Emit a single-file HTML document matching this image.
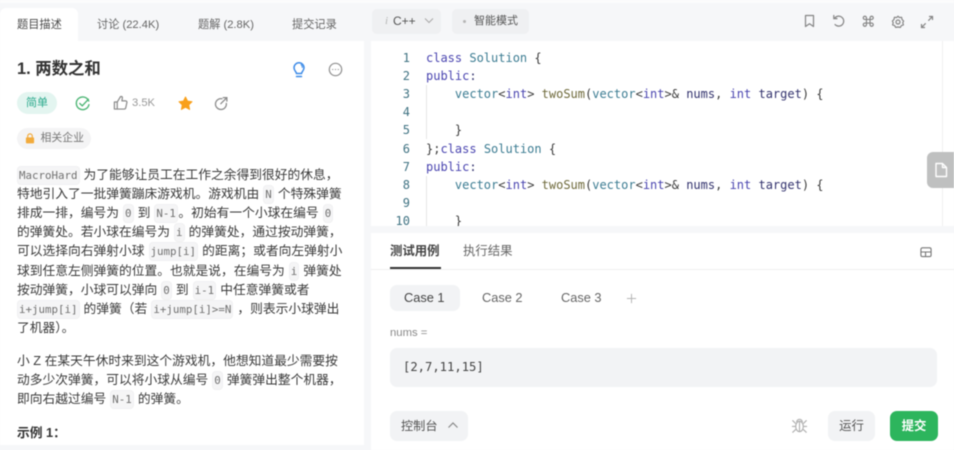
<!DOCTYPE html>
<html lang="zh"><head><meta charset="utf-8"><style>
*{box-sizing:border-box;margin:0;padding:0}
html,body{width:954px;height:450px;overflow:hidden;background:#f6f7f9}
#r{position:absolute;left:0;top:0;width:954px;height:450px;overflow:hidden;background:#f6f7f9;font-family:"Liberation Sans","Noto Sans CJK SC",sans-serif;color:#3c3c3c;filter:blur(.45px)}
.a{position:absolute;white-space:nowrap}
.l{position:absolute;left:17px;white-space:nowrap;font-size:12.75px;line-height:19px;height:19px;color:#3a3a3a}
code{font-family:"DejaVu Sans Mono","Liberation Mono",monospace;font-size:10.8px;color:#707070;background:#f5f5f6;border-radius:4px;padding:2px 1px;margin:0 .5px;border:1px solid #f1f1f2}
.c{position:absolute;left:426px;white-space:pre;font-family:"DejaVu Sans Mono","Liberation Mono",monospace;font-size:12px;line-height:18px;color:#3a3a3a}
.n{position:absolute;width:39px;left:371px;text-align:right;font-family:"DejaVu Sans Mono","Liberation Mono",monospace;font-size:12px;line-height:18px;color:#3f7282}
.k{color:#4a45b0}.t{color:#3c7c92}.f{color:#6f6a3c}.v{color:#33336e}
svg{position:absolute;fill:none}
.tb{position:absolute;top:17px;white-space:nowrap;font-size:11.2px;line-height:16px;color:#666}
</style></head><body><div id="r">
<!-- panels -->
<div class="a" style="left:0;top:0;width:954px;height:3px;background:#fcfcfc"></div>
<div class="a" style="left:0;top:41px;width:364px;height:404px;background:#fff"></div>
<div class="a" style="left:0;top:8px;width:78px;height:34px;background:#fff;border-radius:6px 6px 0 0"></div>
<div class="a" style="left:371px;top:41px;width:583px;height:185px;background:#fff"></div>
<div class="a" style="left:371px;top:233px;width:583px;height:217px;background:#fff"></div>
<div class="a" style="left:942px;top:41px;width:1px;height:185px;background:#f0f0f0"></div>
<!-- left tabs -->
<div class="tb" style="left:17px;color:#4a4a4a">题目描述</div>
<div class="tb" style="left:97px">讨论 (22.4K)</div>
<div class="tb" style="left:198px">题解 (2.8K)</div>
<div class="tb" style="left:292px">提交记录</div>
<!-- title -->
<div class="a" style="left:17px;top:59px;font-size:16.4px;line-height:20px;font-weight:700;color:#333">1. 两数之和</div>
<svg style="left:290px;top:61px" width="18" height="18" viewBox="0 0 18 18" stroke="#3d8be8" stroke-width="1.5" stroke-linecap="round"><path d="M6.5 12.5C6.3 10.8 4 9.6 4 6.8A5 5 0 0 1 14 6.8C14 9.6 11.7 10.8 11.5 12.5Z" /><path d="M6.5 15.5H11.5"/><path d="M11 3.6C12 4.3 12.4 5.3 12.3 6.5" stroke-width="1"/></svg>
<svg style="left:327.5px;top:61.5px" width="15" height="15" viewBox="0 0 16 16" stroke="#8f8f8f" stroke-width="1.3"><circle cx="8" cy="8" r="6.6"/><path d="M4.8 8h.4M7.8 8h.4M10.8 8h.4" stroke-width="1.1" stroke-linecap="round"/></svg>
<!-- meta row -->
<div class="a" style="left:17px;top:92px;width:40px;height:22px;border-radius:11px;background:#e3f5f0;color:#2aa98c;font-size:11px;line-height:22px;text-align:center">简单</div>
<svg style="left:74.5px;top:95.5px" width="15.5" height="15.5" viewBox="0 0 17 17" stroke="#4cb574" stroke-width="1.5" stroke-linecap="round" stroke-linejoin="round"><path d="M15 5.5A7 7 0 1 0 15.3 9.5"/><path d="M5.3 8.2L8 10.8L14.6 3.6"/></svg>
<svg style="left:112.5px;top:95px" width="15" height="15" viewBox="0 0 16 16" stroke="#8a8a8a" stroke-width="1.3" stroke-linejoin="round"><path d="M1.5 7.5H4.5V15H1.5Z"/><path d="M4.5 7.5L7.5 2.6C7.8 1.2 10 1.2 10 3L9.5 6.3H13.4C14.5 6.3 15 7.2 14.8 8L13.6 13.6C13.4 14.5 12.8 15 12 15H4.5"/></svg>
<div class="a" style="left:132px;top:96px;font-size:11.2px;line-height:15px;color:#999">3.5K</div>
<svg style="left:177.5px;top:96px" width="15" height="15" viewBox="0 0 16 16"><path d="M8 1L10.2 5.4L15 6.1L11.5 9.5L12.4 14.4L8 12L3.6 14.4L4.5 9.5L1 6.1L5.8 5.4Z" fill="#f9a01b" stroke="#f9a01b" stroke-linejoin="round"/></svg>
<svg style="left:213.5px;top:96px" width="14.5" height="14.5" viewBox="0 0 16 16" stroke="#8a8a8a" stroke-width="1.4" stroke-linecap="round"><path d="M8.8 3A6 6 0 1 0 13.6 8.2"/><path d="M7.5 8.5L14 2M10.2 1.8H14.2V5.6"/></svg>
<div class="a" style="left:17px;top:128px;width:74px;height:21px;border-radius:11px;background:#f4f4f5"></div>
<svg style="left:24.5px;top:133px" width="10" height="11" viewBox="0 0 11 12"><rect x="1" y="4.8" width="9" height="6.6" rx="1" fill="#f2ab3c"/><path d="M3 5V3.4A2.5 2.5 0 0 1 8 3.4V5" stroke="#f2ab3c" stroke-width="1.3"/></svg>
<div class="a" style="left:40.5px;top:130px;font-size:10.9px;line-height:17px;color:#777">相关企业</div>
<!-- body -->
<div class="l" style="top:164.5px;left:16.5px"><code>MacroHard</code> 为了能够让员工在工作之余得到很好的休息，</div>
<div class="l" style="top:183.5px">特地引入了一批弹簧蹦床游戏机。游戏机由 <code>N</code> 个特殊弹簧</div>
<div class="l" style="top:202.5px">排成一排，编号为 <code>0</code> 到 <code>N-1</code>。初始有一个小球在编号 <code>0</code></div>
<div class="l" style="top:222px">的弹簧处。若小球在编号为 <code>i</code> 的弹簧处，通过按动弹簧，</div>
<div class="l" style="top:241px">可以选择向右弹射小球 <code>jump[i]</code> 的距离；或者向左弹射小</div>
<div class="l" style="top:260.5px">球到任意左侧弹簧的位置。也就是说，在编号为 <code>i</code> 弹簧处</div>
<div class="l" style="top:279.5px">按动弹簧，小球可以弹向 <code>0</code> 到 <code>i-1</code> 中任意弹簧或者</div>
<div class="l" style="top:298.5px;left:16.5px"><code>i+jump[i]</code> 的弹簧（若 <code>i+jump[i]&gt;=N</code> ，则表示小球弹出</div>
<div class="l" style="top:317.5px">了机器）。</div>
<div class="l" style="top:350.5px">小 Z 在某天午休时来到这个游戏机，他想知道最少需要按</div>
<div class="l" style="top:370px">动多少次弹簧，可以将小球从编号 <code>0</code> 弹簧弹出整个机器，</div>
<div class="l" style="top:389px">即向右越过编号 <code>N-1</code> 的弹簧。</div>
<div class="l" style="top:422.5px;font-weight:700;color:#333">示例 1：</div>
<!-- editor toolbar -->
<div class="a" style="left:372px;top:9px;width:69px;height:25px;border-radius:5px;background:#eff0f2"></div>
<div class="a" style="left:385px;top:14px;font-size:11px;line-height:15px;color:#b5b5b5;font-style:italic;font-family:'Liberation Serif',serif">i</div>
<div class="a" style="left:393px;top:14px;font-size:12px;line-height:15px;color:#555">C++</div>
<svg style="left:423px;top:17px" width="12" height="8" viewBox="0 0 12 8" stroke="#aaa" stroke-width="1.1"><path d="M2 1.5L6 5.5L10 1.5"/></svg>
<div class="a" style="left:452px;top:9px;width:77px;height:25px;border-radius:5px;background:#eff0f2"></div>
<div class="a" style="left:463px;top:20px;width:3px;height:3px;border-radius:2px;background:#b5b5b5"></div>
<div class="a" style="left:474px;top:14px;font-size:11px;line-height:15px;color:#555">智能模式</div>
<!-- toolbar icons -->
<svg style="left:803px;top:14px" width="14" height="14" viewBox="0 0 14 14" stroke="#858585" stroke-width="1.2" stroke-linejoin="round"><path d="M2.5 1.5H10.5V12.5L6.5 9.8L2.5 12.5Z"/></svg>
<svg style="left:832px;top:14px" width="14" height="14" viewBox="0 0 14 14" stroke="#858585" stroke-width="1.2" stroke-linecap="round"><path d="M2.8 4A5 5 0 1 1 3 10.5"/><path d="M1.8 1.5V4.6H5"/></svg>
<svg style="left:862px;top:15px" width="12.5" height="12.5" viewBox="0 0 14 14" stroke="#858585" stroke-width="1.3"><path d="M5 5H9V9H5ZM5 5V3.2A1.8 1.8 0 1 0 3.2 5H5M9 5V3.2A1.8 1.8 0 1 1 10.8 5H9M5 9V10.8A1.8 1.8 0 1 1 3.2 9H5M9 9V10.8A1.8 1.8 0 1 0 10.8 9H9"/></svg>
<svg style="left:890.5px;top:14.5px" width="14" height="14" viewBox="0 0 14 14" stroke="#858585" stroke-width="1.2" stroke-linejoin="round"><path d="M7 1.2L8.3 2.5L10.6 2.3L11 4.4L12.6 6L11.8 7.8L12.4 9.9L10.4 10.6L9.3 12.4L7 12L4.7 12.4L3.6 10.6L1.6 9.9L2.2 7.8L1.4 6L3 4.4L3.4 2.3L5.7 2.5Z"/><circle cx="7" cy="7" r="2"/></svg>
<svg style="left:920px;top:14.5px" width="14" height="14" viewBox="0 0 14 14" stroke="#858585" stroke-width="1.2"><path d="M8.3 5.7L12.5 1.5M9 1.5H12.5V5M5.7 8.3L1.5 12.5M1.5 9V12.5H5"/></svg>
<!-- code -->
<div class="n" style="top:49px">1</div><div class="n" style="top:67px">2</div><div class="n" style="top:85px">3</div><div class="n" style="top:103px">4</div><div class="n" style="top:121px">5</div><div class="n" style="top:140px">6</div><div class="n" style="top:158px">7</div><div class="n" style="top:176px">8</div><div class="n" style="top:194px">9</div><div class="n" style="top:212px;height:14px;overflow:hidden">10</div>
<div class="a" style="left:426px;top:85px;width:1px;height:54px;background:#e6e6e6"></div>
<div class="a" style="left:426px;top:176px;width:1px;height:50px;background:#e6e6e6"></div>
<div class="c" style="top:49px"><span class="k">class</span> <span class="t">Solution</span> {</div>
<div class="c" style="top:67px"><span class="k">public</span><span class="v">:</span></div>
<div class="c" style="top:85px">    <span class="t">vector</span>&lt;<span class="k">int</span>&gt; <span class="f">twoSum</span>(<span class="t">vector</span>&lt;<span class="k">int</span>&gt;&amp; <span class="v">nums</span>, <span class="k">int</span> <span class="v">target</span>) {</div>
<div class="c" style="top:121px">    }</div>
<div class="c" style="top:140px">};<span class="k">class</span> <span class="t">Solution</span> {</div>
<div class="c" style="top:158px"><span class="k">public</span><span class="v">:</span></div>
<div class="c" style="top:176px">    <span class="t">vector</span>&lt;<span class="k">int</span>&gt; <span class="f">twoSum</span>(<span class="t">vector</span>&lt;<span class="k">int</span>&gt;&amp; <span class="v">nums</span>, <span class="k">int</span> <span class="v">target</span>) {</div>
<div class="c" style="top:212px;height:14px;overflow:hidden">    }</div>
<!-- floating -->
<div class="a" style="left:927px;top:152px;width:27px;height:36px;background:#bfc0c0;border-radius:6px 0 0 6px"></div>
<svg style="left:934px;top:162px" width="14" height="16" viewBox="0 0 14 16" stroke="#fff" stroke-width="1.4" stroke-linejoin="round"><path d="M2 1.5H8.5L12.5 5.5V14.5H2Z"/><path d="M8.5 1.5V5.5H12.5"/></svg>
<!-- test tabs -->
<div class="a" style="left:390px;top:242px;font-size:12.4px;line-height:18px;font-weight:700;color:#444">测试用例</div>
<div class="a" style="left:463px;top:242px;font-size:12.4px;line-height:18px;color:#666">执行结果</div>
<div class="a" style="left:390px;top:267px;width:51px;height:2px;background:#333"></div>
<div class="a" style="left:371px;top:269px;width:583px;height:1px;background:#efefef"></div>
<svg style="left:920px;top:245.5px" width="12" height="12" viewBox="0 0 13 13" stroke="#777" stroke-width="1.2"><rect x="1" y="2" width="11" height="9.5" rx="1.6"/><path d="M1 6.5H12M6 6.5V11.5"/></svg>
<!-- cases -->
<div class="a" style="left:390px;top:285px;width:70px;height:26px;border-radius:7px;background:#f2f3f5"></div>
<div class="a" style="left:404px;top:290px;font-size:12.8px;line-height:16px;color:#444">Case 1</div>
<div class="a" style="left:482px;top:290px;font-size:12.8px;line-height:16px;color:#666">Case 2</div>
<div class="a" style="left:561px;top:290px;font-size:12.8px;line-height:16px;color:#666">Case 3</div>
<svg style="left:626px;top:292.5px" width="11" height="11" viewBox="0 0 12 12" stroke="#b5b5b5" stroke-width="1.1"><path d="M6 1V11M1 6H11"/></svg>
<div class="a" style="left:390px;top:326px;font-size:11.3px;line-height:14px;color:#888">nums =</div>
<div class="a" style="left:390px;top:348px;width:547px;height:39px;border-radius:7px;background:#f2f3f5"></div>
<div class="a" style="left:403px;top:359px;font-family:'DejaVu Sans Mono','Liberation Mono',monospace;font-size:12.2px;line-height:17px;color:#444">[2,7,11,15]</div>
<!-- bottom -->
<div class="a" style="left:390px;top:411px;width:78px;height:30px;border-radius:7px;background:#f2f3f5"></div>
<div class="a" style="left:401px;top:417px;font-size:12.2px;line-height:18px;color:#555">控制台</div>
<svg style="left:446.5px;top:421px" width="12" height="8" viewBox="0 0 12 8" stroke="#888" stroke-width="1.2"><path d="M1.5 6.5L6 2L10.5 6.5"/></svg>
<svg style="left:790.5px;top:417px" width="17" height="17" viewBox="0 0 18 18" stroke="#b0b0b0" stroke-width="1.2"><ellipse cx="9" cy="10" rx="4" ry="5.5"/><path d="M6 5.5A3 3 0 0 1 12 5.5M9 5V15.5M1.5 3.5L5 7M16.5 3.5L13 7M1 10H5M17 10H13M1.5 16.5L5.2 13M16.5 16.5L12.8 13"/></svg>
<div class="a" style="left:828px;top:411px;width:47px;height:30px;border-radius:7px;background:#f2f3f5;font-size:12.4px;line-height:30px;text-align:center;color:#555">运行</div>
<div class="a" style="left:890px;top:411px;width:48px;height:30px;border-radius:7px;background:#2db55d;font-size:12.4px;line-height:30px;text-align:center;color:#fff;font-weight:700">提交</div>
</div></body></html>
